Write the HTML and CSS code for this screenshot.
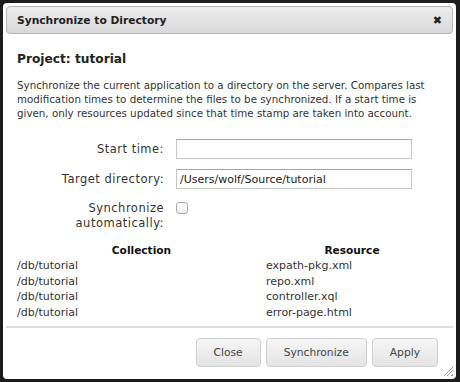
FILE: index.html
```html
<!DOCTYPE html>
<html lang="en">
<head>
  <meta charset="UTF-8" />
  <title>Synchronize to Directory</title>
  <link rel="stylesheet" href="styles.css">
</head>
<body>
  <div class="dialog">
    <div class="titlebar">
      <span class="title">Synchronize to Directory</span>
      <span class="close-x">✖</span>
    </div>

    <div class="content">
      <h2>Project: tutorial</h2>
      <p class="intro">Synchronize the current application to a directory on the server. Compares last modification times to determine the files to be synchronized. If a start time is given, only resources updated since that time stamp are taken into account.</p>

      <div class="form">
        <label>Start time:</label>
        <input type="text" class="field" value="">
        <label>Target directory:</label>
        <input type="text" class="field" value="/Users/wolf/Source/tutorial">
        <label class="multi">Synchronize<br>automatically:</label>
        <div class="check-cell"><span class="check"></span></div>
      </div>

      <div class="files">
        <div class="head">Collection</div>
        <div class="head">Resource</div>
        <div>/db/tutorial</div><div>expath-pkg.xml</div>
        <div>/db/tutorial</div><div>repo.xml</div>
        <div>/db/tutorial</div><div>controller.xql</div>
        <div>/db/tutorial</div><div>error-page.html</div>
      </div>
    </div>

    <div class="buttons">
      <button>Close</button>
      <button>Synchronize</button>
      <button>Apply</button>
    </div>
    <span class="grip"></span>
  </div>
</body>
</html>
```

FILE: styles.css
```css
* {
  margin: 0;
  padding: 0;
  box-sizing: border-box;
}

body {
  width: 460px;
  height: 382px;
  overflow: hidden;
  background: #1c1c1c;
  font-family: "DejaVu Sans", Verdana, sans-serif;
  font-size: 10.3px;
  color: #222;
  padding: 3px 4px 3px 3px;
}

.dialog {
  position: relative;
  height: 376px;
  background: #fff;
  border-radius: 4px;
  padding: 3px;
  display: flex;
  flex-direction: column;
}

.titlebar {
  height: 28px;
  border: 1px solid #b4b4b4;
  border-radius: 4px;
  background: linear-gradient(#ececec, #d9d9d9);
  display: flex;
  align-items: center;
  justify-content: space-between;
  padding: 0 10px 0 10px;
}

.title {
  font-weight: bold;
  font-size: 10.7px;
  color: #222;
}

.close-x {
  font-size: 11px;
  color: #222;
}

.content {
  flex: 1;
  padding: 18px 11px 0 11px;
}

h2 {
  font-size: 12.2px;
  font-weight: bold;
  margin-bottom: 12px;
}

.intro {
  line-height: 14px;
  color: #333;
}

.form {
  display: grid;
  grid-template-columns: 147px 236px;
  column-gap: 12px;
  row-gap: 10px;
  margin-top: 19px;
  align-items: center;
}

.form label {
  text-align: right;
  font-size: 11.5px;
  letter-spacing: 0.5px;
  color: #333;
}

.form label.multi {
  align-self: start;
  line-height: 15px;
  padding-top: 2px;
}

.field {
  height: 20px;
  border: 1px solid #c6c6c6;
  border-top-color: #a8a8a8;
  font-family: inherit;
  font-size: 11px;
  padding: 0 3px;
  color: #222;
  outline: none;
}

.check-cell {
  align-self: start;
  padding-top: 3px;
}

.check {
  display: block;
  width: 12px;
  height: 12px;
  border: 1px solid #aaa;
  border-radius: 3px;
  background: linear-gradient(#fff, #ececec);
}

.files {
  display: grid;
  grid-template-columns: 249px 172px;
  font-size: 11px;
  line-height: 15.4px;
  margin-top: 12px;
  color: #333;
}

.files .head {
  font-weight: bold;
  font-size: 10.6px;
  text-align: center;
  color: #111;
}

.buttons {
  height: 50px;
  border-top: 2px solid #ddd;
  display: flex;
  justify-content: flex-end;
  align-items: center;
  gap: 5px;
  padding: 0 15px 0 0;
}

.buttons button {
  height: 29px;
  min-width: 64px;
  padding: 0 17px;
  border: 1px solid #d0d0d0;
  border-radius: 4px;
  background: linear-gradient(#f6f6f6, #e4e4e4);
  font-family: inherit;
  font-size: 10.7px;
  color: #444;
}

.grip {
  position: absolute;
  right: 3px;
  bottom: 3px;
  width: 9px;
  height: 9px;
  background: linear-gradient(135deg, transparent 45%, #999 45%, #999 52%, transparent 52%, transparent 65%, #999 65%, #999 72%, transparent 72%, transparent 85%, #999 85%);
}
```
